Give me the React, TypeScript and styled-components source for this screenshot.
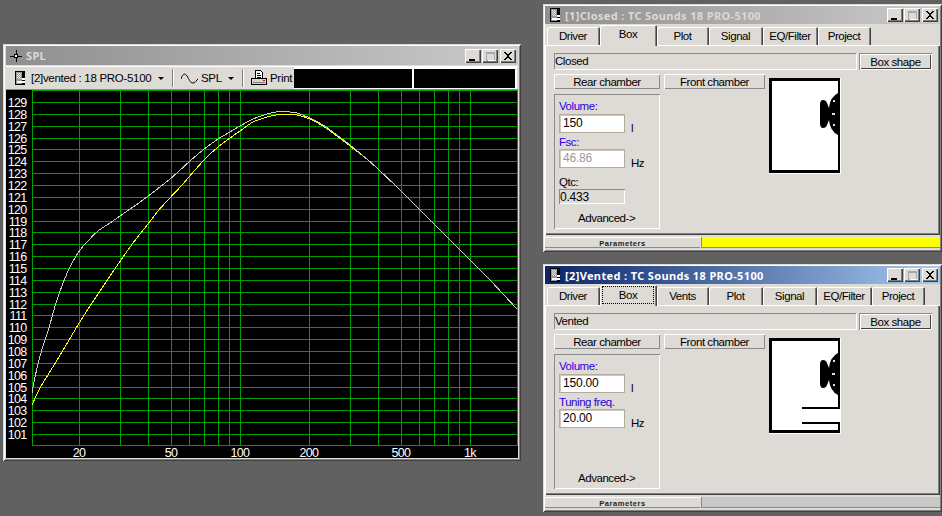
import React from "react";
import styled, { createGlobalStyle } from "styled-components";

const FACE = "#dedad5";
const Global = createGlobalStyle`
  html, body { margin: 0; padding: 0; width: 942px; height: 516px; overflow: hidden; background: #616161; }
  * { box-sizing: border-box; }
`;

const Desktop = styled.div`
  position: relative;
  width: 942px;
  height: 516px;
  background: #616161;
  font-family: "Liberation Sans", Arial, sans-serif;
  font-size: 11.5px;
  letter-spacing: -0.45px;
  color: #000;
  overflow: hidden;
`;

const Win = styled.div<{ $x: number; $y: number; $w: number; $h: number }>`
  position: absolute;
  left: ${(p) => p.$x}px;
  top: ${(p) => p.$y}px;
  width: ${(p) => p.$w}px;
  height: ${(p) => p.$h}px;
  background: ${FACE};
  padding: 2px;
  display: flex;
  flex-direction: column;
  box-shadow: inset 1px 1px 0 ${FACE}, inset -1px -1px 0 #404040, inset 2px 2px 0 #fff, inset -2px -2px 0 #808080;
`;

const PlotWin = styled(Win)`
  padding: 2px 3px 3px 3px;
`;

const TitleBar = styled.div<{ $active?: boolean; $h?: number; $pl?: number }>`
  height: ${(p) => p.$h ?? 18}px;
  flex: none;
  display: flex;
  align-items: center;
  padding: 0 2px 0 ${(p) => p.$pl ?? 5}px;
  background: ${(p) =>
    p.$active ? "linear-gradient(90deg, #0a246a, #a6caf0)" : "linear-gradient(90deg, #8f8f8f, #cbcbcb)"};
`;

const TitleText = styled.span<{ $active?: boolean; $ml?: number }>`
  font-family: "Noto Sans", "DejaVu Sans", sans-serif;
  font-weight: 700;
  font-size: 11px;
  letter-spacing: 0.36px;
  color: ${(p) => (p.$active ? "#fff" : "#dcd9d4")};
  margin-left: ${(p) => p.$ml ?? 5}px;
  white-space: nowrap;
  flex: 1;
`;

const CapButtons = styled.div`
  display: flex;
  margin-left: auto;
`;

const CapBtn = styled.div<{ $gap?: number }>`
  width: 16px;
  height: 14px;
  margin-left: ${(p) => p.$gap ?? 0}px;
  background: ${FACE};
  box-shadow: inset 1px 1px 0 #fff, inset -1px -1px 0 #404040, inset -2px -2px 0 #808080;
  display: flex;
  align-items: center;
  justify-content: center;
  svg { display: block; }
`;

const Caption = () => (
  <CapButtons>
    <CapBtn>
      <svg width="10" height="10" viewBox="0 0 10 10">
        <rect x="1" y="8" width="6" height="2" fill="#000" />
      </svg>
    </CapBtn>
    <CapBtn $gap={1}>
      <svg width="10" height="10" viewBox="0 0 10 10" shapeRendering="crispEdges">
        <rect x="1.5" y="1.5" width="8" height="8" fill="none" stroke="#a8a8a8" />
        <rect x="1" y="1" width="9" height="2" fill="#a8a8a8" />
        <path d="M3 9.5h7.5M10.5 3v7" stroke="#fff" fill="none" />
      </svg>
    </CapBtn>
    <CapBtn $gap={2}>
      <svg width="10" height="10" viewBox="0 0 10 10" shapeRendering="crispEdges">
        <path d="M1 1h2l2 3 2-3h2L6 5l3 4H7L5 6 3 9H1l3-4z" fill="#000" />
      </svg>
    </CapBtn>
  </CapButtons>
);

const SpeakerIcon = () => (
  <svg width="10" height="14" viewBox="0 0 10 14" shapeRendering="crispEdges">
    <rect width="10" height="14" fill="#000" />
    <rect x="1" y="1" width="6" height="12" fill="#9a9a9a" />
    <path d="M2 2h1v1H2zM4 2h1v1H4zM3 3h1v1H3zM5 3h1v1H5zM2 4h1v1H2zM4 4h1v1H4zM3 5h1v1H3zM5 5h1v1H5zM2 6h1v1H2zM4 6h1v1H4zM3 7h1v1H3zM5 7h1v1H5z" fill="#e8e8e8" />
    <rect x="7" y="7" width="3" height="2" fill="#fff" />
    <rect x="2" y="10" width="8" height="2" fill="#fff" />
  </svg>
);

const TargetIcon = () => (
  <svg width="12" height="12" viewBox="0 0 12 12" shapeRendering="crispEdges">
    <path d="M6 0v4M6 8v4M0 6h4M8 6h4" stroke="#000" fill="none" transform="translate(0 0)" />
    <rect x="4.5" y="4.5" width="3" height="3" fill="none" stroke="#000" />
    <rect x="5" y="5" width="2" height="2" fill="#fff" />
  </svg>
);

/* ---------- SPL window ---------- */

const Toolbar = styled.div`
  height: 24px;
  flex: none;
  margin-top: 1px;
  display: flex;
  align-items: center;
  background: ${FACE};
  box-shadow: inset 0 1px 0 #fff, inset 0 -1px 0 #8a8a8a;
  padding: 0 1px 0 9px;
  position: relative;
`;

const ToolText = styled.span<{ $ml: number; $w: number }>`
  margin-left: ${(p) => p.$ml}px;
  width: ${(p) => p.$w}px;
  white-space: nowrap;
  font-size: 11.5px;
  letter-spacing: -0.3px;
  flex: none;
`;

const Arrow = styled.span<{ $ml: number }>`
  margin-left: ${(p) => p.$ml}px;
  width: 0;
  height: 0;
  flex: none;
  border-left: 3px solid transparent;
  border-right: 3px solid transparent;
  border-top: 3px solid #000;
`;

const ToolSep = styled.span<{ $ml: number }>`
  margin-left: ${(p) => p.$ml}px;
  width: 2px;
  height: 18px;
  flex: none;
  background: linear-gradient(90deg, #808080 50%, #fff 50%);
`;

const ToolIcon = styled.span<{ $ml: number }>`
  margin-left: ${(p) => p.$ml}px;
  display: flex;
  flex: none;
`;

const Display = styled.div`
  margin-left: auto;
  height: 22px;
  width: 223px;
  flex: none;
  display: flex;
  border-top: 2px solid #fff;
  border-bottom: 1px solid #fff;
  border-right: 2px solid #fff;
  background: #000;
`;

const DisplayCell = styled.div<{ $w?: number }>`
  height: 100%;
  background: #000;
  width: ${(p) => (p.$w ? `${p.$w}px` : "auto")};
  flex: ${(p) => (p.$w ? "none" : 1)};
  & + & { border-left: 2px solid #fff; }
`;

const Chart = styled.svg`
  display: block;
  width: 512px;
  height: 368px;
  flex: none;
  background: #000;
  overflow: visible;
`;

const ChartText = styled.text`
  fill: #fff;
  font-family: "Liberation Sans", Arial, sans-serif;
  font-size: 12.5px;
  letter-spacing: -0.7px;
`;

const whitePts = [
  [32, 393], [35, 377], [39, 360], [44, 343], [49, 328], [53, 313], [58, 297], [65, 278], [72, 263], [80, 250],
  [87, 242], [98, 231], [110, 223], [120, 216], [133, 207], [143, 200], [170, 179], [190, 161], [203, 150],
  [218, 139], [230, 132], [240, 126], [253, 119], [267, 114], [276, 112], [283, 111], [290, 112], [297, 113],
  [310, 118], [323, 125], [337, 135], [350, 145], [368, 160], [378, 169], [400, 190], [420, 210], [435, 225],
  [457, 247], [470, 260], [490, 280], [503, 294], [517, 309],
];
const yellowPts = [
  [32, 405], [40, 388], [51, 370], [62, 352], [78, 325], [90, 306], [100, 291], [110, 276], [121, 260], [133, 243],
  [148, 224], [158, 211], [168, 200], [182, 185], [195, 170], [205, 159], [218, 147], [230, 138],
  [240, 131], [253, 122], [267, 117], [276, 115], [283, 114], [297, 115], [310, 119], [323, 126], [337, 136], [350, 146],
  [368, 160], [378, 169], [400, 190], [420, 210],
];

// Catmull-Rom through the sampled points, drawn as cubic segments.
const toPath = (a: number[][]) => {
  let d = `M${a[0][0]} ${a[0][1]}`;
  for (let i = 0; i < a.length - 1; i++) {
    const p0 = a[Math.max(i - 1, 0)];
    const p1 = a[i];
    const p2 = a[i + 1];
    const p3 = a[Math.min(i + 2, a.length - 1)];
    const c1x = p1[0] + (p2[0] - p0[0]) / 6;
    const c1y = p1[1] + (p2[1] - p0[1]) / 6;
    const c2x = p2[0] - (p3[0] - p1[0]) / 6;
    const c2y = p2[1] - (p3[1] - p1[1]) / 6;
    d += `C${c1x} ${c1y} ${c2x} ${c2y} ${p2[0]} ${p2[1]}`;
  }
  return d;
};

const xLines = [32, 79, 120, 148, 171, 189, 204, 218, 229, 240, 309, 350, 378, 401, 419, 434, 448, 459, 470, 517];
const dbs = Array.from({ length: 29 }, (_, i) => 129 - i);
const yOf = (db: number) => Math.round(102 + (129 - db) * 11.857);
const xLabels: [string, number][] = [["20", 79], ["50", 171], ["100", 240], ["200", 309], ["500", 401], ["1k", 470]];

const SplChart = () => (
  <Chart viewBox="6 90 512 368">
    <g stroke="#009c00" strokeWidth="1" shapeRendering="crispEdges">
      {xLines.map((x) => (
        <line key={x} x1={x + 0.5} x2={x + 0.5} y1="90" y2="446" />
      ))}
      <line x1="32" x2="518" y1="90.5" y2="90.5" />
      <line x1="32" x2="518" y1="445.5" y2="445.5" />
      {dbs.map((d) => (
        <line key={d} x1="32" x2="518" y1={yOf(d) + 0.5} y2={yOf(d) + 0.5} />
      ))}
    </g>
    <path d={toPath(yellowPts)} fill="none" stroke="#ffff00" strokeWidth="1" shapeRendering="crispEdges" />
    <path d={toPath(whitePts)} fill="none" stroke="#cccccc" strokeWidth="1" shapeRendering="crispEdges" />
    {dbs.map((d) => (
      <ChartText key={d} x="26.5" y={yOf(d) + 5} textAnchor="end">
        {d}
      </ChartText>
    ))}
    {xLabels.map(([t, x]) => (
      <ChartText key={t} x={x} y="457" textAnchor="middle">
        {t}
      </ChartText>
    ))}
  </Chart>
);

const SplWindow = () => (
  <PlotWin $x={3} $y={44} $w={518} $h={417}>
    <TitleBar $h={19} $pl={4}>
      <TargetIcon />
      <TitleText $ml={4}>SPL</TitleText>
      <Caption />
    </TitleBar>
    <Toolbar>
      <ToolIcon $ml={0}>
        <SpeakerIcon />
      </ToolIcon>
      <ToolText $ml={6} $w={127}>[2]vented : 18 PRO-5100</ToolText>
      <Arrow $ml={0} />
      <ToolSep $ml={8} />
      <ToolIcon $ml={7}>
        <svg width="17" height="12" viewBox="0 0 17 12" fill="none" stroke="#000">
          <path d="M0 7C2 1 4 1 6 4s3 7 6 7 3-3 5-4" />
        </svg>
      </ToolIcon>
      <ToolText $ml={3} $w={27}>SPL</ToolText>
      <Arrow $ml={0} />
      <ToolSep $ml={8} />
      <ToolIcon $ml={7}>
        <svg width="16" height="16" viewBox="0 0 16 16" shapeRendering="crispEdges">
          <path d="M4.5 .5h5l2 2v6h-7z" fill="#fff" stroke="#000" />
          <path d="M6 3h3M6 5h4M6 7h4" stroke="#000" />
          <path d="M.5 8.5h15v6H.5z" fill="#d8d4cc" stroke="#000" />
          <path d="M2 12h12" stroke="#808080" />
          <rect x="12" y="10" width="2" height="1" fill="#e00000" />
        </svg>
      </ToolIcon>
      <ToolText $ml={3} $w={24}>Print</ToolText>
      <Display>
        <DisplayCell $w={118} />
        <DisplayCell />
      </Display>
    </Toolbar>
    <SplChart />
  </PlotWin>
);

/* ---------- Box windows ---------- */

const TabRow = styled.div`
  height: 21px;
  flex: none;
  display: flex;
  align-items: flex-end;
  padding-left: 2px;
  position: relative;
  z-index: 1;
`;

const Tab = styled.div<{ $w: number; $on?: boolean }>`
  width: ${(p) => p.$w}px;
  height: ${(p) => (p.$on ? 21 : 18)}px;
  margin-bottom: ${(p) => (p.$on ? -1 : 0)}px;
  padding-bottom: ${(p) => (p.$on ? 3 : 1)}px;
  padding-right: 1px;
  flex: none;
  display: flex;
  align-items: center;
  justify-content: center;
  background: ${FACE};
  border-radius: 2px 2px 0 0;
  box-shadow: inset 1px 1px 0 #fff, inset -1px 0 0 #404040, inset -2px 0 0 #808080;
`;

const FocusInner = styled.span`
  display: flex;
  align-items: center;
  justify-content: center;
  width: 50px;
  height: 16px;
  margin-top: 1px;
  outline: 1px dotted #000;
`;

const Panel = styled.div`
  flex: 1;
  min-height: 0;
  padding: 8px 0 0 9px;
  box-shadow: inset 1px 1px 0 #fff, inset -1px -1px 0 #404040, inset -2px -2px 0 #808080;
`;

const TopRow = styled.div`
  display: flex;
  height: 17px;
`;

const TypeField = styled.div`
  width: 302px;
  height: 16px;
  padding-left: 1px;
  display: flex;
  align-items: center;
  box-shadow: inset 1px 1px 0 #8a8a8a, 1px 1px 0 #fff;
`;

const ShapeButton = styled.div`
  margin-left: 3px;
  width: 73px;
  height: 17px;
  display: flex;
  align-items: center;
  justify-content: center;
  background: ${FACE};
  box-shadow: inset 1px 1px 0 #8a8a8a, inset -1px -1px 0 #fff, inset 2px 2px 0 #fff, inset -2px -2px 0 #404040;
`;

const BodyRow = styled.div`
  display: flex;
  margin-top: 4px;
`;

const LeftCol = styled.div`
  width: 211px;
  flex: none;
`;

const ChamberRow = styled.div`
  display: flex;
  gap: 4px;
`;

const ChamberBtn = styled.div<{ $w: number }>`
  width: ${(p) => p.$w}px;
  height: 15px;
  display: flex;
  align-items: center;
  justify-content: center;
  background: ${FACE};
  box-shadow: inset 1px 1px 0 #fff, inset -1px -1px 0 #8a8a8a;
`;

const Group = styled.div`
  margin-top: 5px;
  width: 106px;
  height: 135px;
  padding: 4px 0 4px 5px;
  display: flex;
  flex-direction: column;
  box-shadow: inset 1px 1px 0 #8a8a8a, inset -1px -1px 0 #fff;
`;

const Label = styled.div<{ $blue?: boolean; $mt?: number; $mb?: number }>`
  height: 15px;
  margin-top: ${(p) => p.$mt ?? 0}px;
  margin-bottom: ${(p) => p.$mb ?? 0}px;
  display: flex;
  align-items: center;
  color: ${(p) => (p.$blue ? "#2a00e0" : "#000")};
`;

const FieldRow = styled.div`
  display: flex;
  align-items: flex-end;
  gap: 6px;
`;

const Input = styled.div<{ $dim?: boolean }>`
  width: 66px;
  height: 19px;
  padding: 0 0 1px 3px;
  display: flex;
  align-items: center;
  background: #fff;
  border: 1px solid #b3ab9c;
  box-shadow: inset 1px 1px 0 #cfc9be;
  font-size: 12px;
  letter-spacing: -0.2px;
  color: ${(p) => (p.$dim ? "#9a9a9a" : "#000")};
`;

const Unit = styled.span`
  line-height: 10px;
`;

const ReadOut = styled.div`
  width: 66px;
  height: 15px;
  padding-left: 1px;
  display: flex;
  align-items: center;
  font-size: 12px;
  letter-spacing: -0.2px;
  box-shadow: inset 1px 1px 0 #8a8a8a, inset -1px -1px 0 #fff, inset 0 1px 0 #8a8a8a;
`;

const Advanced = styled.div`
  margin-top: auto;
  padding: 0 0 0 19px;
  line-height: 14px;
`;

const Drawing = styled.svg`
  display: block;
  margin: 4px 0 0 4px;
  width: 72px;
  height: 96px;
  flex: none;
`;

const Status = styled.div`
  flex: none;
  height: 11px;
  margin: 2px 0 2px;
  display: flex;
  box-shadow: inset 0 1px 0 #fff;
`;

const StatusLabel = styled.div`
  width: 155px;
  display: flex;
  align-items: center;
  justify-content: center;
  padding-top: 1px;
  font-size: 7.5px;
  font-weight: 700;
  letter-spacing: 0.55px;
  color: #222;
  box-shadow: inset 0 -1px 0 #8a8a8a;
`;

const StatusBar = styled.div<{ $yellow?: boolean }>`
  flex: 1;
  margin-left: 1px;
  background: ${(p) => (p.$yellow ? "#ffff00" : "#c8c8c8")};
  box-shadow: inset 1px 0 0 #8a8a8a, inset 0 -1px 0 #8a8a8a;
`;

const BoxDrawing = ({ vents }: { vents?: boolean }) => (
  <Drawing viewBox="0 0 72 96" shapeRendering="crispEdges">
    <rect x="0" y="0" width="72" height="96" fill="#fff" />
    <rect x="0" y="0" width="71" height="95" fill="#000" />
    <rect x="3" y="3" width="66" height="89" fill="#fff" />
    <path
      d="M51 27q0-5 3-5t4 3l2 5q1-11 9-15v42q-8-4-9-15l-2 5q-1 3-4 3t-3-5z"
      fill="#000"
      shapeRendering="auto"
    />
    <rect x="64" y="22" width="2" height="2" fill="#ddd" />
    <rect x="63" y="35" width="3" height="2" fill="#ddd" />
    <rect x="64" y="46" width="2" height="2" fill="#ddd" />
    {vents && (
      <>
        <rect x="33" y="69" width="36" height="2" fill="#000" />
        <rect x="33" y="84" width="36" height="2" fill="#000" />
        <rect x="69" y="71" width="2" height="13" fill="#fff" />
      </>
    )}
  </Drawing>
);

type BoxProps = {
  y: number;
  active?: boolean;
  title: string;
  tabs: [string, number][];
  kind: string;
  volume: string;
  second: string;
  secondValue: string;
  dim?: boolean;
  qtc?: string;
  vents?: boolean;
  yellow?: boolean;
};

const BoxWindow = (p: BoxProps) => (
  <Win $x={543} $y={p.y} $w={399} $h={248}>
    <TitleBar $active={p.active}>
      <SpeakerIcon />
      <TitleText $active={p.active}>{p.title}</TitleText>
      <Caption />
    </TitleBar>
    <TabRow>
      {p.tabs.map(([t, w]) => (
        <Tab key={t} $w={w} $on={t === "Box"}>
          {t === "Box" && p.active ? <FocusInner>{t}</FocusInner> : t}
        </Tab>
      ))}
    </TabRow>
    <Panel>
      <TopRow>
        <TypeField>{p.kind}</TypeField>
        <ShapeButton>Box shape</ShapeButton>
      </TopRow>
      <BodyRow>
        <LeftCol>
          <ChamberRow>
            <ChamberBtn $w={106}>Rear chamber</ChamberBtn>
            <ChamberBtn $w={101}>Front chamber</ChamberBtn>
          </ChamberRow>
          <Group>
            <Label $blue $mb={1}>Volume:</Label>
            <FieldRow>
              <Input>{p.volume}</Input>
              <Unit>l</Unit>
            </FieldRow>
            <Label $blue $mt={1}>{p.second}</Label>
            <FieldRow>
              <Input $dim={p.dim}>{p.secondValue}</Input>
              <Unit>Hz</Unit>
            </FieldRow>
            {p.qtc && (
              <>
                <Label $mt={6}>Qtc:</Label>
                <ReadOut>{p.qtc}</ReadOut>
              </>
            )}
            <Advanced>Advanced-&gt;</Advanced>
          </Group>
        </LeftCol>
        <BoxDrawing vents={p.vents} />
      </BodyRow>
    </Panel>
    <Status>
      <StatusLabel>Parameters</StatusLabel>
      <StatusBar $yellow={p.yellow} />
    </Status>
  </Win>
);

export default function App() {
  return (
    <Desktop>
      <Global />
      <SplWindow />
      <BoxWindow
        y={4}
        title="[1]Closed : TC Sounds 18 PRO-5100"
        tabs={[["Driver", 53], ["Box", 57], ["Plot", 52], ["Signal", 54], ["EQ/Filter", 55], ["Project", 53]]}
        kind="Closed"
        volume="150"
        second="Fsc:"
        secondValue="46.86"
        dim
        qtc="0.433"
        yellow
      />
      <BoxWindow
        y={264}
        active
        title="[2]Vented : TC Sounds 18 PRO-5100"
        tabs={[["Driver", 53], ["Box", 57], ["Vents", 52], ["Plot", 54], ["Signal", 54], ["EQ/Filter", 55], ["Project", 53]]}
        kind="Vented"
        volume="150.00"
        second="Tuning freq."
        secondValue="20.00"
        vents
      />
    </Desktop>
  );
}
